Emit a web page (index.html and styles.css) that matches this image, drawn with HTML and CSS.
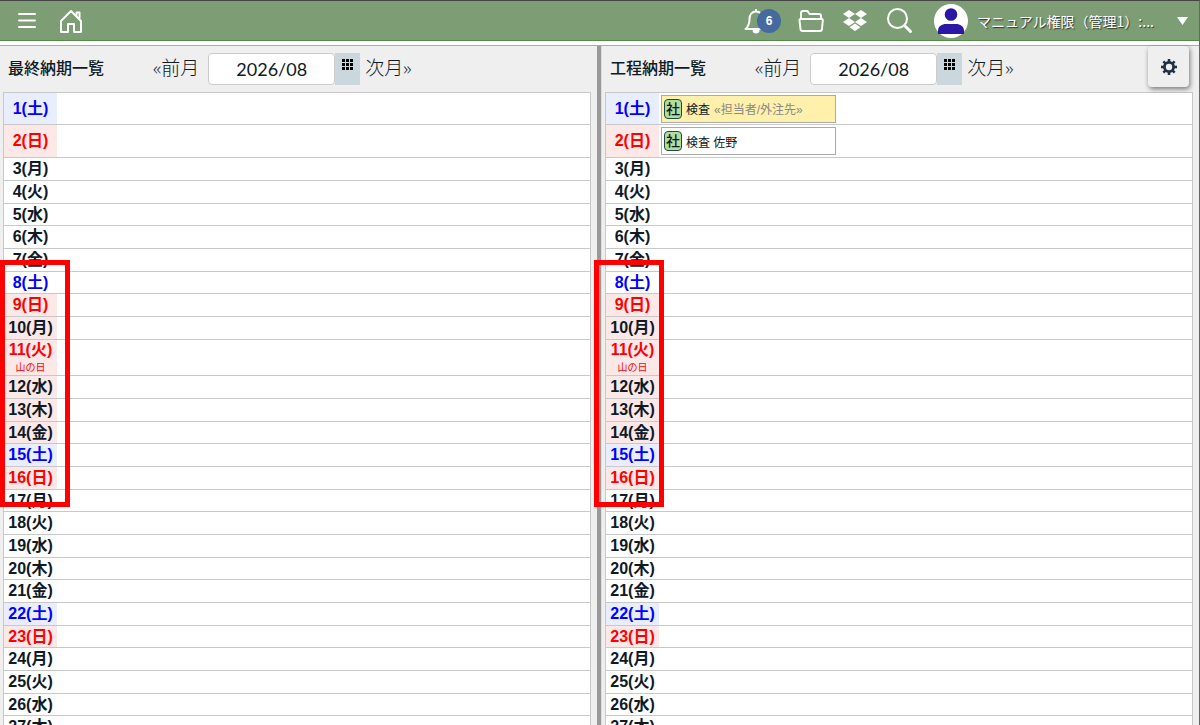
FILE: index.html
```
<!DOCTYPE html>
<html lang="ja">
<head>
    <meta charset="UTF-8">
    <meta name="viewport" content="width=device-width, initial-scale=1.0">
    <title>納期一覧</title>
    <link rel="stylesheet" href="styles.css">
</head>
<body>
    <header class="topbar">
        <button class="icon-btn" type="button" aria-label="メニュー">
            <svg width="18" height="18" viewBox="0 0 18 18" fill="none" stroke="#fff" stroke-width="2" stroke-linecap="round"><path d="M1 2h16M1 8.500h16M1 15h16"/></svg>
        </button>
        <a class="icon-btn home" href="#" aria-label="ホーム">
            <svg width="24" height="24" viewBox="0 0 24 24" fill="none" stroke="#fff" stroke-width="2" stroke-linejoin="round"><path d="M2 12v11h7v-8h6v8h7V12L12 2z"/><path d="M17.500 6.500V3.500h3v6"/></svg>
        </a>
        <div class="tools">
            <button class="icon-btn bell" type="button" aria-label="通知">
                <svg width="24" height="26" viewBox="0 0 24 26" fill="none" stroke="#fff" stroke-width="2" stroke-linejoin="round"><path d="M12 3.500C8 3.500 5.500 6.500 5.500 11c0 5-1.500 8-4 10h21c-2.500-2-4-5-4-10 0-4.500-2.500-7.500-6.500-7.500z"/><path d="M12 1v2"/><path fill="#fff" d="M9.500 23h5c-.5 2-4.500 2-5 0z"/></svg>
                <span class="count">6</span>
            </button>
            <button class="icon-btn" type="button" aria-label="フォルダ">
                <svg width="26" height="22" viewBox="0 0 26 22" fill="none" stroke="#fff" stroke-width="2" stroke-linejoin="round"><path d="M3 9V3q0-2 2-2h4.500l2 3H21q2 0 2 2v3"/><path d="M2.500 9h21q1.500 0 1.300 1.500L24 19q-.2 2-2 2H4.500q-1.800 0-2-2l-1-8.500Q1.300 9 2.500 9z"/></svg>
            </button>
            <button class="icon-btn" type="button" aria-label="Dropbox">
                <svg width="26" height="24" viewBox="0 0 26 24" fill="#fff"><path d="M7 1l6 4-6 4-6-4zM19 1l6 4-6 4-6-4zM7 9l6 4-6 4-6-4zM19 9l6 4-6 4-6-4zM13 14.500l5.500 3.800L13 22l-5.500-3.700z"/></svg>
            </button>
            <button class="icon-btn" type="button" aria-label="検索">
                <svg width="27" height="27" viewBox="0 0 27 27" fill="none" stroke="#fff" stroke-linecap="round"><circle cx="11.500" cy="11.500" r="9.500" stroke-width="2"/><path stroke-width="3" d="M19 19l5.500 5.500"/></svg>
            </button>
        </div>
        <button class="user" type="button">
            <svg class="avatar" width="34" height="34" viewBox="0 0 34 34"><circle cx="17" cy="17" r="17" fill="#fff"/><circle cx="17" cy="10.500" r="6.300" fill="#2c16a6"/><path fill="#2c16a6" d="M4 30v-3c0-5 4-7 8-7h10c4 0 8 2 8 7v3z"/></svg>
            <span class="user-name">マニュアル権限（管理1）:...</span>
            <svg width="11" height="8" viewBox="0 0 11 8" fill="#fff"><path d="M0 0h11L5.500 8z"/></svg>
        </button>
    </header>

    <main class="panels">
        <section class="panel">
            <div class="panel-head">
                <h2>最終納期一覧</h2>
                <a class="month-link" href="#">«前月</a>
                <input class="month" type="text" value="2026/08" aria-label="最終納期の年月">
                <button class="picker" type="button" aria-label="カレンダー">
                    <svg width="11" height="11" viewBox="0 0 11 11"><path d="M0 0h3v3H0zM4 0h3v3H4zM8 0h3v3H8zM0 4h3v3H0zM4 4h3v3H4zM8 4h3v3H8zM0 8h3v3H0zM4 8h3v3H4zM8 8h3v3H8z"/></svg>
                </button>
                <a class="month-link" href="#">次月»</a>
            </div>
            <table class="days" id="finalDays"></table>
            <div class="marker"></div>
        </section>
        <div class="divider"></div>
        <section class="panel">
            <div class="panel-head">
                <h2>工程納期一覧</h2>
                <a class="month-link" href="#">«前月</a>
                <input class="month" type="text" value="2026/08" aria-label="工程納期の年月">
                <button class="picker" type="button" aria-label="カレンダー">
                    <svg width="11" height="11" viewBox="0 0 11 11"><path d="M0 0h3v3H0zM4 0h3v3H4zM8 0h3v3H8zM0 4h3v3H0zM4 4h3v3H4zM8 4h3v3H8zM0 8h3v3H0zM4 8h3v3H4zM8 8h3v3H8z"/></svg>
                </button>
                <a class="month-link" href="#">次月»</a>
                <button class="settings" type="button" aria-label="設定">
                    <svg width="16" height="16" viewBox="0 0 16 16"><g fill="#1c3144"><path d="M6.700 0h2.600v16H6.700z"/><path d="M6.700 0h2.600v16H6.700z" transform="rotate(45 8 8)"/><path d="M6.700 0h2.600v16H6.700z" transform="rotate(90 8 8)"/><path d="M6.700 0h2.600v16H6.700z" transform="rotate(135 8 8)"/><circle cx="8" cy="8" r="6"/></g><circle cx="8" cy="8" r="3.200" fill="#efefef"/></svg>
                </button>
            </div>
            <table class="days" id="processDays"></table>
            <div class="marker marker-wide"></div>
        </section>
    </main>

    <script>
        const weekdays = ['日', '月', '火', '水', '木', '金', '土'];
        const holidays = { 11: '山の日' };
        const daysOff = [10, 12, 13, 14]; // summer closing
        const plainDays = [8]; // working Saturday
        const tasks = {
            1: '<div class="task task-open"><span class="badge">社</span>検査 <span class="assignee">«担当者/外注先»</span></div>',
            2: '<div class="task"><span class="badge">社</span>検査 佐野</div>'
        };

        function renderDays(tableId, items) {
            let html = '';
            for (let d = 1; d <= 31; d++) {
                const w = new Date(2026, 7, d).getDay();
                let cls = 'day';
                if (w === 0 || holidays[d]) cls += ' red';
                if (w === 6) cls += ' blue';
                if (w === 0 || holidays[d] || daysOff.includes(d)) cls += ' off';
                if (w === 6 && !plainDays.includes(d)) cls += ' sat';
                const note = holidays[d] ? '<span class="holiday">' + holidays[d] + '</span>' : '';
                html += '<tr class="' + (d <= 2 ? 'tall' : '') + '">' +
                    '<th scope="row" class="' + cls + '">' + d + '(' + weekdays[w] + ')' + note + '</th>' +
                    '<td>' + (items[d] || '') + '</td></tr>';
            }
            document.getElementById(tableId).innerHTML = html;
        }

        renderDays('finalDays', {});
        renderDays('processDays', tasks);
    </script>
</body>
</html>
```
FILE: styles.css
```
* {
    box-sizing: border-box;
}
body {
    margin: 0;
    height: 100vh;
    overflow: hidden;
    display: flex;
    flex-direction: column;
    background-color: #fff;
    border-top: 1px solid #444;
    border-right: 1px solid #666;
    color: #0e1a26;
    font-family: "Liberation Sans", "Noto Sans CJK JP", sans-serif;
}
button {
    border: none;
    background: none;
    padding: 0;
    font-family: inherit;
}
a {
    color: inherit;
    text-decoration: none;
}

/* top bar */
.topbar {
    display: flex;
    align-items: center;
    flex-shrink: 0;
    height: 40px;
    padding: 0 11px 0 18px;
    background-color: #7d9d74;
    border-bottom: 1px solid #558a45;
}
.icon-btn {
    display: flex;
    position: relative;
}
.home {
    margin-left: 23px;
}
.tools {
    display: flex;
    align-items: center;
    gap: 18px;
    margin-left: auto;
}
.bell {
    width: 36px;
}
.count {
    position: absolute;
    left: 13px;
    top: 1px;
    width: 24px;
    height: 24px;
    border-radius: 50%;
    background-color: #466a9f;
    color: #fff;
    font-size: 12px;
    font-weight: bold;
    line-height: 24px;
    text-align: center;
}
.user {
    display: flex;
    align-items: center;
    margin-left: 21px;
    color: #fff;
}
.user-name {
    width: 180px;
    margin: 0 20px 0 9px;
    white-space: nowrap;
    text-align: left;
    font-family: "Noto Sans CJK JP", sans-serif;
    font-size: 14px;
    line-height: 20px;
    text-shadow: 1px 1px 1px #333;
}

/* panels */
.panels {
    display: flex;
    flex: 1;
    min-height: 0;
    margin-top: 4px;
    border-top: 1px solid #aaa;
    background-color: #efefef;
}
.panel {
    position: relative;
    flex: 1;
    min-width: 0;
    padding: 0 6px 0 3px;
}
.divider {
    width: 5px;
    background-color: #999;
    border-right: 1px solid #ddd;
}
.panel-head {
    display: flex;
    align-items: center;
    height: 46px;
    padding: 0 4px 0 5px;
}
.panel-head h2 {
    width: 145px;
    margin: 0;
    padding-bottom: 4px;
    font-family: "Noto Sans CJK JP", sans-serif;
    font-size: 16px;
    font-weight: 500;
}
.month-link {
    padding-bottom: 4px;
    font-family: "Open Sans", "Noto Sans CJK JP", sans-serif;
    font-size: 19px;
    font-weight: 300;
    white-space: nowrap;
}
.month {
    width: 127px;
    height: 32px;
    margin-left: 9px;
    border: 1px solid #ccc;
    border-radius: 4px;
    background-color: #fff;
    color: inherit;
    font-family: Lato, sans-serif;
    font-size: 18px;
    text-align: center;
}
.picker {
    display: flex;
    justify-content: center;
    width: 25px;
    height: 32px;
    margin-right: 5px;
    padding-top: 6px;
    background-color: #cad7dc;
}
.settings {
    display: flex;
    align-items: center;
    justify-content: center;
    align-self: flex-start;
    width: 41px;
    height: 41px;
    margin-left: auto;
    border-radius: 4px;
    background-color: #efefef;
    box-shadow: 1px 2px 5px rgba(0, 0, 0, 0.5);
}

/* day list */
.days {
    width: 100%;
    border: 1px solid #c8c8c8;
    border-spacing: 0;
    background-color: #fff;
}
.days th, .days td {
    height: 23px;
    padding: 0;
    border-bottom: 1px solid #c8c8c8;
}
.days tr:nth-child(3n + 2) > * {
    height: 22px;
}
.days .tall > * {
    height: 32px;
}
.days .tall + .tall > * {
    height: 33px;
}
.days td {
    padding-left: 2px;
}
.day {
    width: 53px;
    font-size: 16px;
    line-height: 20px;
}
.red {
    color: #f00;
}
.blue {
    color: #00f;
}
.off {
    background-color: #fde8e8;
}
.sat {
    background-color: #e8eefe;
}
.holiday {
    display: block;
    font-size: 10px;
    font-weight: normal;
    line-height: 15px;
}
.task {
    display: flex;
    align-items: center;
    gap: 4px;
    width: 175px;
    height: 28px;
    padding-left: 2px;
    border: 1px solid #aaa;
    background-color: #fff;
    font-size: 12px;
}
.task-open {
    background-color: #fff0ab;
}
.badge {
    width: 18px;
    height: 20px;
    border: 1px solid #1d4a40;
    border-radius: 4px;
    background-color: #b3dd9c;
    font-size: 14px;
    font-weight: 500;
    line-height: 18px;
    text-align: center;
}
.assignee {
    color: #888;
}

/* red frame around the holiday period */
.marker {
    position: absolute;
    left: 0;
    top: 214px;
    width: 70px;
    height: 247px;
    border: 5px solid #f00;
}
.marker-wide {
    left: -8px;
}
```
